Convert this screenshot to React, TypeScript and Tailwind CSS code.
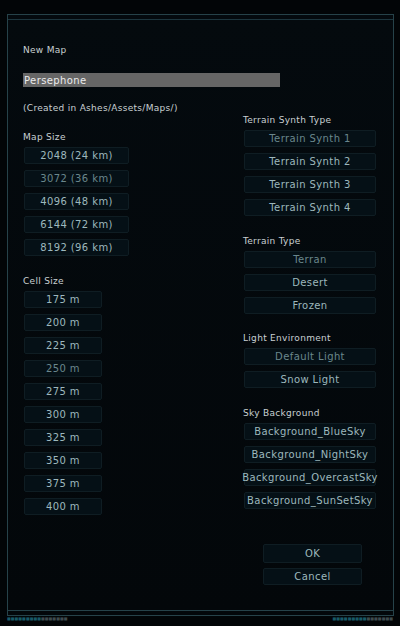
const MAP_SIZES = [
  { label: '2048 (24 km)', dim: false },
  { label: '3072 (36 km)', dim: true },
  { label: '4096 (48 km)', dim: false },
  { label: '6144 (72 km)', dim: false },
  { label: '8192 (96 km)', dim: false },
]

const CELL_SIZES = ['175 m', '200 m', '225 m', '250 m', '275 m', '300 m', '325 m', '350 m', '375 m', '400 m']

const SYNTHS = ['Terrain Synth 1', 'Terrain Synth 2', 'Terrain Synth 3', 'Terrain Synth 4']
const TERRAINS = ['Terran', 'Desert', 'Frozen']
const LIGHTS = ['Default Light', 'Snow Light']
const SKIES = ['Background_BlueSky', 'Background_NightSky', 'Background_OvercastSky', 'Background_SunSetSky']

const DIM = new Set(['Terrain Synth 1', 'Terran', 'Default Light', '250 m'])

function Label({ children, className = '' }: { children: React.ReactNode; className?: string }) {
  return <div className={`h-[12px] text-[9px] leading-[12px] text-[#c9d0d2] tracking-[0.3px] ${className}`}>{children}</div>
}

function Option({ label, width, dim }: { label: string; width: string; dim?: boolean }) {
  return (
    <button
      className={`flex h-[17px] ${width} items-center justify-center whitespace-nowrap rounded-[2px] border border-[#0f1d23] bg-[#051016] text-[10px] tracking-[0.4px] ${
        dim ? 'text-[#6a878c]' : 'text-[#9db8bd]'
      }`}
    >
      {label}
    </button>
  )
}

export default function App() {
  return (
    <div
      className="h-[626px] w-[400px] overflow-hidden bg-[#020507] pl-[7px] pt-[14px]"
      style={{ fontFamily: '"DejaVu Sans", "Liberation Sans", sans-serif' }}
    >
      <div className="flex h-[602px] w-[387px] flex-col border border-[#264249] bg-gradient-to-b from-[#040a0e] to-[#03070a]">
        <div className="mt-[4px] h-px bg-[#1d363e]" />

        <div className="flex-1 pl-[15px]">
          <Label className="mt-[24px]">New Map</Label>
          <div className="mt-[17px] flex h-[14px] w-[257px] items-center bg-[#666666] pl-[1px] text-[10px] tracking-[0.4px] text-[#ececec]">
            Persephone
          </div>

          <div className="mt-[15px] grid grid-cols-[220px_1fr]">
            <div>
              <Label>(Created in Ashes/Assets/Maps/)</Label>
              <Label className="mt-[17px]">Map Size</Label>
              <div className="ml-[1px] mt-[4px] flex flex-col gap-[6px]">
                {MAP_SIZES.map((s) => (
                  <Option key={s.label} label={s.label} width="w-[105px]" dim={s.dim} />
                ))}
              </div>
              <Label className="mt-[19px]">Cell Size</Label>
              <div className="ml-[1px] mt-[4px] flex flex-col gap-[6px]">
                {CELL_SIZES.map((c) => (
                  <Option key={c} label={c} width="w-[78px]" dim={DIM.has(c)} />
                ))}
              </div>
            </div>

            <div>
              <Label className="mt-[12px]">Terrain Synth Type</Label>
              <div className="ml-[1px] mt-[4px] flex flex-col gap-[6px]">
                {SYNTHS.map((s) => (
                  <Option key={s} label={s} width="w-[132px]" dim={DIM.has(s)} />
                ))}
              </div>
              <Label className="mt-[19px]">Terrain Type</Label>
              <div className="ml-[1px] mt-[4px] flex flex-col gap-[6px]">
                {TERRAINS.map((s) => (
                  <Option key={s} label={s} width="w-[132px]" dim={DIM.has(s)} />
                ))}
              </div>
              <Label className="mt-[18px]">Light Environment</Label>
              <div className="ml-[1px] mt-[4px] flex flex-col gap-[6px]">
                {LIGHTS.map((s) => (
                  <Option key={s} label={s} width="w-[132px]" dim={DIM.has(s)} />
                ))}
              </div>
              <Label className="mt-[19px]">Sky Background</Label>
              <div className="ml-[1px] mt-[4px] flex flex-col gap-[6px]">
                {SKIES.map((s) => (
                  <Option key={s} label={s} width="w-[132px]" />
                ))}
              </div>
              <div className="ml-[20px] mt-[35px] flex flex-col gap-[5px]">
                <Option label="OK" width="w-[99px] h-[19px]" />
                <Option label="Cancel" width="w-[99px]" />
              </div>
            </div>
          </div>
        </div>

        <div className="mb-[4px] h-px bg-[#264249]" />
      </div>
      <div className="flex w-[387px] justify-between pr-[1px] text-[4px] leading-[6px]">
        <span>
          <span className="text-[#185966]">■■■■■■■■■</span>
          <span className="text-[#3e4a4e]">■■■■■■■</span>
        </span>
        <span>
          <span className="text-[#185966]">■■■■■■■■■</span>
          <span className="text-[#3e4a4e]">■■■■■■■</span>
        </span>
      </div>
    </div>
  )
}
